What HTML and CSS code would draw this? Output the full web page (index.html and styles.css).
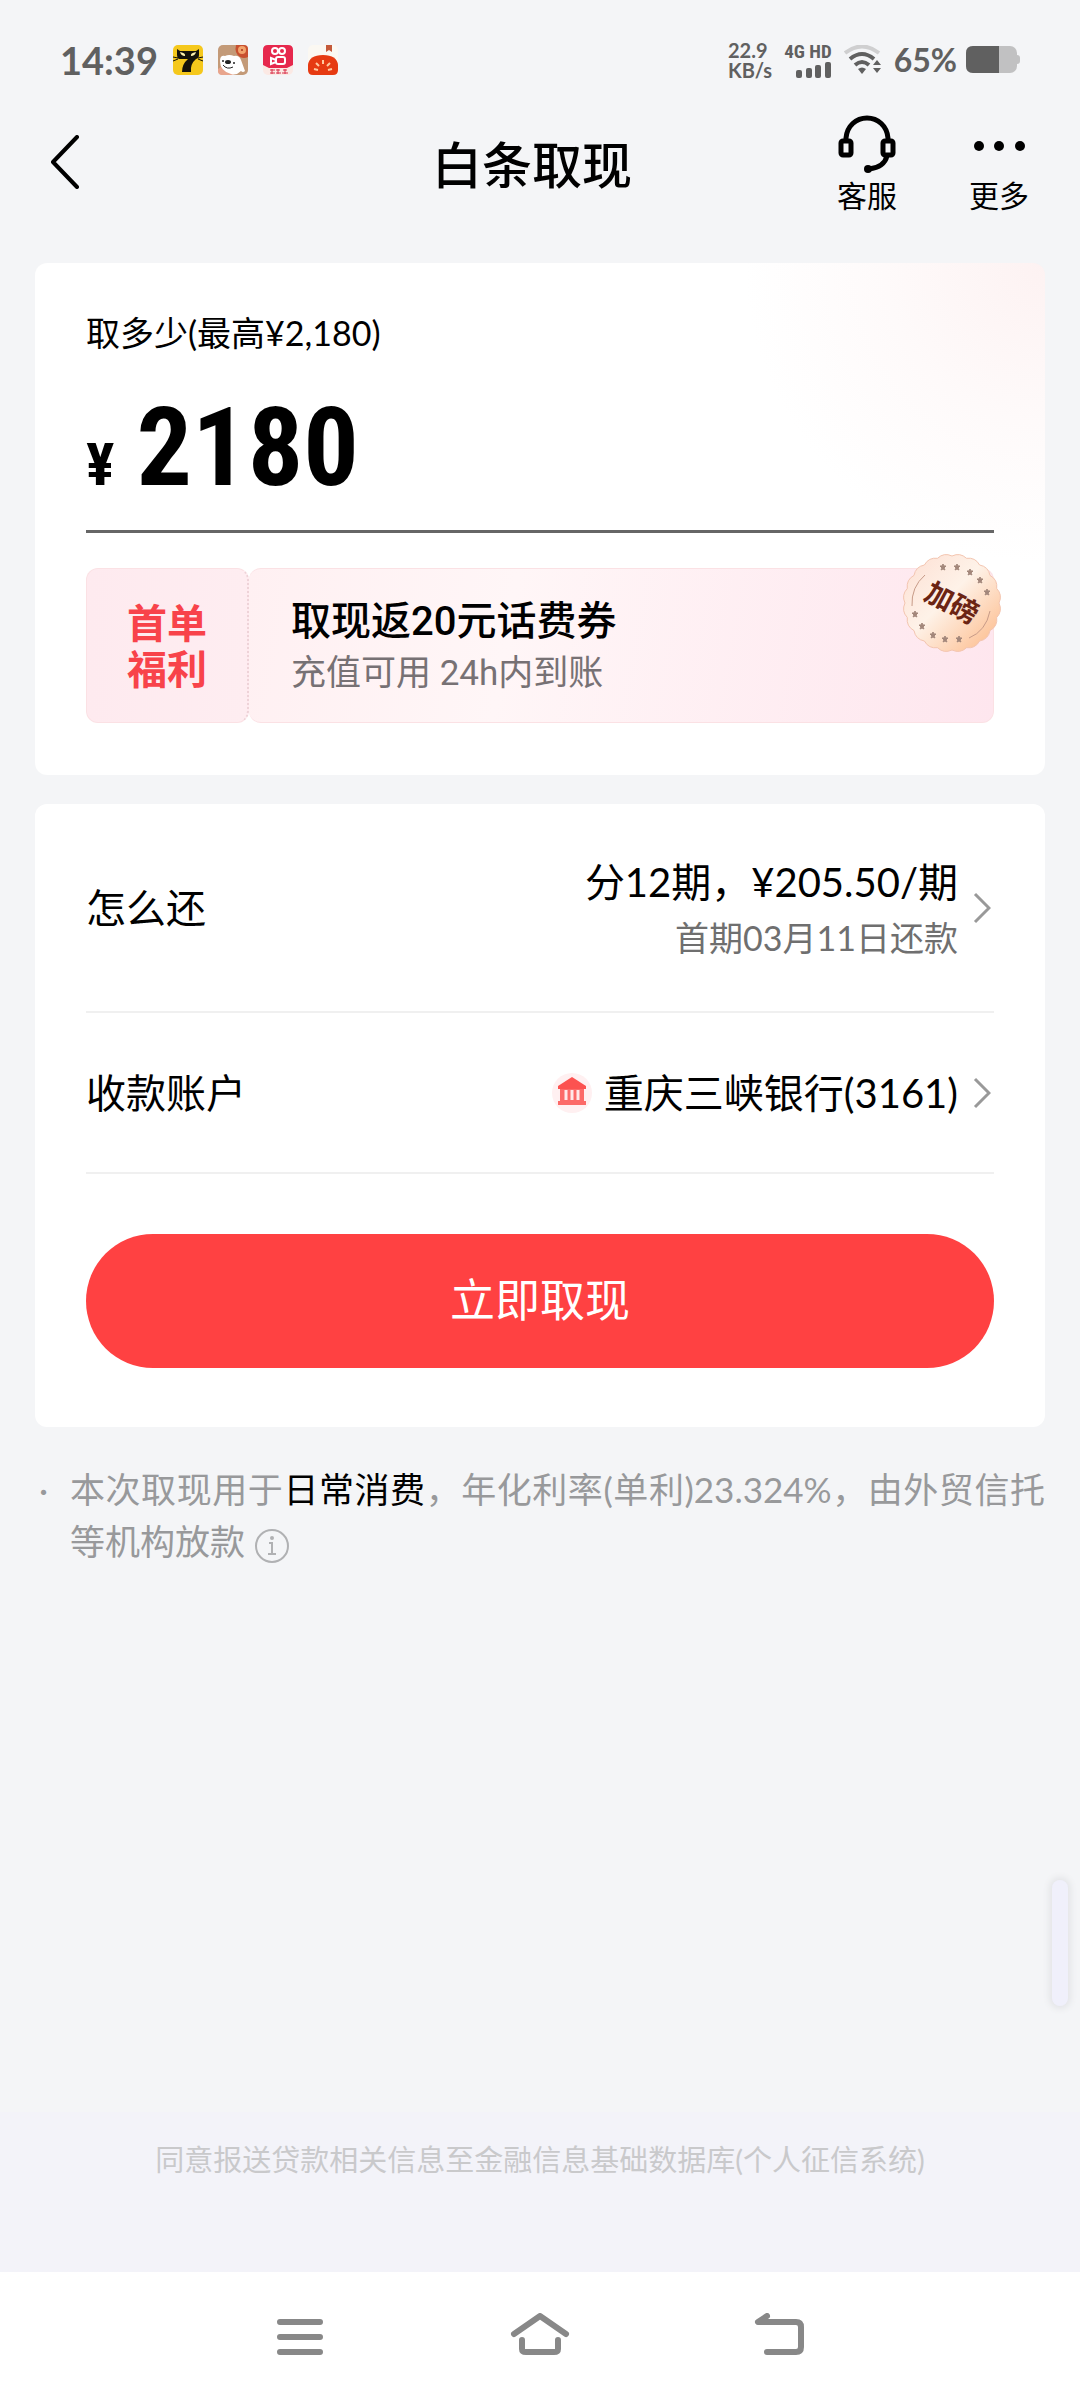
FILE: index.html
```html
<!DOCTYPE html>
<html lang="zh-CN">
<head>
    <meta charset="utf-8">
    <meta name="viewport" content="width=device-width, initial-scale=1.0" />
    <title>白条取现</title>
    <link rel="stylesheet" href="styles.css">
</head>

<body>
    <!-- Status bar -->
    <div class="status-bar">
        <span class="status-time">14:39</span>
        <div class="status-apps">
            <svg width="30" height="30" viewBox="0 0 30 30">
                <rect width="30" height="30" rx="5" fill="#f5c81c"/>
                <path d="M4 4l3 2h16l3-2v6q0 3-3 4-6 5-5 13H9q0-8 6-13H6q-2-1-2-4z" fill="#15130b"/>
                <path d="M0 12l5 1M0 16l5-2M30 12l-5 1M30 16l-5-2" stroke="#15130b" stroke-width="1"/>
                <path d="M7 7q1 4 5 4 1-3-5-4zM23 7q-1 4-5 4-1-3 5-4z" fill="#fff3b0"/>
            </svg>
            <svg width="30" height="30" viewBox="0 0 30 30">
                <rect width="30" height="30" rx="5" fill="#c39a78"/>
                <path d="M18 0h8q4 0 4 4v8q-4 2-8 0-6-4-4-12z" fill="#c8502f"/>
                <circle cx="24" cy="5" r="4" fill="#f2a36b"/>
                <circle cx="24" cy="5" r="1" fill="#a8341b"/>
                <path d="M0 24q5-5 12-1l4 7H4q-4 0-4-4z" fill="#e8a58d"/>
                <path d="M2 16q0-6 5-5 4-2 9 0 5-1 7 4l4 11q-2 2-4 0-5 5-10 3Q2 26 2 16z" fill="#fff"/>
                <ellipse cx="10" cy="17" rx="3" ry="2" fill="#222"/>
                <circle cx="5" cy="16" r="1" fill="#222"/>
                <circle cx="16" cy="18" r="1" fill="#222"/>
                <path d="M5 20q4 5 10 2" fill="none" stroke="#222" stroke-width="1"/>
            </svg>
            <svg width="30" height="30" viewBox="0 0 30 30">
                <rect width="30" height="30" rx="5" fill="#fbe9e4"/>
                <path d="M5 0h20q5 0 5 5v15l-6 3H6l-6-3V5q0-5 5-5z" fill="#e6284d"/>
                <g fill="none" stroke="#fff" stroke-width="2">
                    <circle cx="12" cy="6" r="3"/>
                    <circle cx="19" cy="6" r="3"/>
                    <rect x="13" y="12" width="9" height="7" rx="2"/>
                    <path d="M13 15l-5-2v6l5-2z"/>
                </g>
                <path d="M7 25h5M7 28h5M9 24v5M13 25h4M13 28h5M15 24v5M20 25h4M19 28h6M22 24v5" stroke="#d8304a" stroke-width="1"/>
            </svg>
            <svg width="30" height="30" viewBox="0 0 30 30">
                <rect width="30" height="30" rx="5" fill="#fbf8f2"/>
                <path d="M18 0h6v7l-3-2-3 2z" fill="#c4593a"/>
                <path d="M0 20q1-10 15-10t15 10v5q0 5-5 5H5q-5 0-5-5z" fill="#e63a12"/>
                <path d="M6 24l4 1M8 18l3 3M15 15v4M22 18l-3 3M24 24l-4 1" stroke="#ffc9a0" stroke-width="2"/>
            </svg>
        </div>
        <div class="status-right">
            <span class="net-speed">22.9<br>KB/s</span>
            <div class="signal">
                <span>4G HD</span>
                <svg width="36" height="17" viewBox="0 0 36 17" fill="#606060">
                    <rect x="0" y="8" width="6" height="8" rx="2"/>
                    <rect x="10" y="6" width="6" height="10" rx="2"/>
                    <rect x="19" y="3" width="6" height="13" rx="2"/>
                    <rect x="29" y="0" width="6" height="16" rx="2"/>
                </svg>
            </div>
            <svg class="wifi" width="38" height="30" viewBox="0 0 38 30" fill="none" stroke-width="4">
                <path d="M1 8q17-13 34 0" stroke="#cfcfd0"/>
                <path d="M6 14q12-10 24 0" stroke="#606060"/>
                <path d="M11 20q7-6 14 0" stroke="#606060"/>
                <path d="M14 24q4-3 8 0l-4 5z" fill="#606060"/>
                <path d="M29 20l4-5 4 5zM29 23h8l-4 5z" fill="#606060"/>
            </svg>
            <span class="battery-text">65%</span>
            <svg width="54" height="28" viewBox="0 0 54 28">
                <rect width="51" height="27" rx="7" fill="#c1c1c2"/>
                <path d="M51 9q3 0 3 3v3q0 3-3 3z" fill="#c1c1c2"/>
                <path d="M7 0h26v27H7q-7 0-7-7V7q0-7 7-7z" fill="#606060"/>
            </svg>
        </div>
    </div>

    <!-- Page header -->
    <header class="page-header">
        <button class="back-button" type="button" aria-label="返回">
            <svg width="30" height="54" viewBox="0 0 30 54" fill="none" stroke="#000" stroke-width="4" stroke-linecap="round" stroke-linejoin="round">
                <path d="M27 2L3 27l24 25"/>
            </svg>
        </button>
        <h1 class="page-title">白条取现</h1>
        <div class="header-actions">
            <button class="header-action" type="button">
                <svg width="60" height="60" viewBox="0 -2 60 60" fill="none" stroke="#000" stroke-width="5">
                    <path d="M9 24v-1C10 11 19 3 30 3s20 8 21 20v1"/>
                    <rect x="4" y="26" width="10" height="14" rx="2"/>
                    <rect x="46" y="26" width="10" height="14" rx="2"/>
                    <path d="M50 41c-2 8-9 12-18 13" stroke-linecap="round"/>
                    <circle cx="31" cy="54" r="4" fill="#000" stroke="none"/>
                </svg>
                <span>客服</span>
            </button>
            <button class="header-action" type="button">
                <svg width="60" height="60" viewBox="0 -2 60 60">
                    <circle cx="10" cy="31" r="5"/>
                    <circle cx="30" cy="31" r="5"/>
                    <circle cx="51" cy="31" r="5"/>
                </svg>
                <span>更多</span>
            </button>
        </div>
    </header>

    <main class="content">
        <!-- Amount -->
        <section class="card amount-card">
            <label class="amount-label" for="amount">取多少(最高¥2,180)</label>
            <div class="amount-row">
                <span class="currency">¥</span>
                <input class="amount-input" id="amount" type="text" inputmode="numeric" value="2180" />
            </div>
            <div class="coupon">
                <div class="coupon-tag">首单<br>福利</div>
                <div class="coupon-body">
                    <div class="coupon-title">取现返20元话费券</div>
                    <div class="coupon-desc">充值可用 24h内到账</div>
                </div>
                <svg class="coupon-badge" width="98" height="98" viewBox="-49 -49 98 98">
                    <defs>
                        <linearGradient id="badgeFill" x1="0" y1="0" x2="1" y2="1">
                            <stop offset="0" stop-color="#fddfd3"/>
                            <stop offset="0.45" stop-color="#fef2e8"/>
                            <stop offset="0.85" stop-color="#fdc79f"/>
                            <stop offset="1" stop-color="#fdd3b2"/>
                        </linearGradient>
                        <path id="star" d="M0-3L1-1 3-1 1 1 2 3 0 2-2 3-1 1-3-1-1-1z" fill="#a3877b" stroke="#a3877b" stroke-width="1"/>
                    </defs>
                    <path d="M47 0A13 13 0 0 1 44.7 14.5A13 13 0 0 1 38 27.6A13 13 0 0 1 27.6 38A13 13 0 0 1 14.5 44.7A13 13 0 0 1 0 47A13 13 0 0 1-14.5 44.7A13 13 0 0 1-27.6 38A13 13 0 0 1-38 27.6A13 13 0 0 1-44.7 14.5A13 13 0 0 1-47 0A13 13 0 0 1-44.7-14.5A13 13 0 0 1-38-27.6A13 13 0 0 1-27.6-38A13 13 0 0 1-14.5-44.7A13 13 0 0 1 0-47A13 13 0 0 1 14.5-44.7A13 13 0 0 1 27.6-38A13 13 0 0 1 38-27.6A13 13 0 0 1 44.7-14.5A13 13 0 0 1 47 0z" fill="url(#badgeFill)" stroke="#f3c5b0" stroke-width="1"/>
                    <path d="M-27-28Q-41-16-40 3M38 8Q34 28 17 35" fill="none" stroke="#c79b88" stroke-width="1"/>
                    <use href="#star" x="-9" y="-36"/>
                    <use href="#star" x="5" y="-36"/>
                    <use href="#star" x="18" y="-31"/>
                    <use href="#star" x="28" y="-23"/>
                    <use href="#star" x="35" y="-11"/>
                    <use href="#star" x="-37" y="11"/>
                    <use href="#star" x="-30" y="23"/>
                    <use href="#star" x="-19" y="32"/>
                    <use href="#star" x="-7" y="36"/>
                    <use href="#star" x="7" y="36"/>
                    <text class="badge-text" x="0" y="10" text-anchor="middle" transform="rotate(28)">加磅</text>
                </svg>
            </div>
        </section>

        <!-- Repayment and account -->
        <section class="card detail-card">
            <a class="detail-row repay-row" href="#">
                <span class="detail-name">怎么还</span>
                <span class="detail-value">
                    <span>分12期，¥205.50/期</span>
                    <span class="detail-sub">首期03月11日还款</span>
                </span>
                <svg class="chevron" width="18" height="32" viewBox="0 0 18 32"><path d="M2 2l14 14L2 30"/></svg>
            </a>
            <a class="detail-row" href="#">
                <span class="detail-name">收款账户</span>
                <svg class="bank-icon" width="40" height="40" viewBox="0 0 40 40">
                    <circle cx="20" cy="20" r="20" fill="#fff0f1"/>
                    <path d="M20 4L34 13v3H6v-3z" fill="#fc5250"/>
                    <path d="M8 16h24v12h2v4H6v-4h2z" fill="#fc6a68"/>
                    <path d="M14 17v10M20 17v10M26 17v10" stroke="#ffe8e9" stroke-width="3"/>
                </svg>
                <span class="detail-value">重庆三峡银行(3161)</span>
                <svg class="chevron" width="18" height="32" viewBox="0 0 18 32"><path d="M2 2l14 14L2 30"/></svg>
            </a>
            <button class="submit-button" type="button">立即取现</button>
        </section>

        <!-- Loan note -->
        <div class="note">
            <span class="note-dot">·</span>
            <p class="note-text">本次取现用于<b>日常消费</b>，年化利率(单利)23.324%，由外贸信托等机构放款
                <svg class="info-icon" width="36" height="36" viewBox="0 0 36 36" fill="none" stroke="#b0b1b3" stroke-width="2">
                    <circle cx="18" cy="18" r="16"/>
                    <path d="M15 15h3v11M14 26h8"/>
                    <circle cx="18" cy="10" r="1"/>
                </svg>
            </p>
        </div>
    </main>

    <footer class="agreement">同意报送贷款相关信息至金融信息基础数据库(个人征信系统)</footer>

    <!-- System navigation -->
    <nav class="system-nav">
        <button type="button" aria-label="菜单">
            <svg width="60" height="48" viewBox="0 0 60 48">
                <path d="M10 9h40M10 24h40M10 39h40"/>
            </svg>
        </button>
        <button type="button" aria-label="主页">
            <svg width="60" height="48" viewBox="0 0 60 48">
                <path d="M4 21L30 3l26 18M12 27v9q0 3 4 3h28q4 0 4-3v-9"/>
            </svg>
        </button>
        <button type="button" aria-label="返回上一级">
            <svg width="60" height="48" viewBox="0 0 60 48">
                <path d="M17 3L8 9h38q5 0 5 5v20q0 5-5 5H17"/>
            </svg>
        </button>
    </nav>

    <div class="edge-handle"></div>
</body>
</html>
```

FILE: styles.css
```css
* {
    box-sizing: border-box;
}

body {
    --bg-color: #f4f5f7;
    --status-color: #606060;
    --accent-color: #ff4142;

    font-family: Lato, "Noto Sans CJK SC", sans-serif;
    background-color: var(--bg-color);
    color: #000000;
    margin: 0;
    min-height: 100vh;
    display: flex;
    flex-direction: column;
}

button {
    font-family: inherit;
    color: inherit;
    background: none;
    border: none;
    padding: 0;
    cursor: pointer;
}

svg {
    flex-shrink: 0;
}

/* Status bar */
.status-bar {
    height: 108px;
    padding: 12px 60px 0;
    display: flex;
    align-items: center;
    color: var(--status-color);
    font-weight: 700;
}

.status-time {
    font-size: 38px;
    line-height: 48px;
}

.status-apps {
    display: flex;
    gap: 15px;
    margin-left: 15px;
}

.status-right {
    display: flex;
    align-items: center;
    margin-left: auto;
}

.net-speed {
    font-size: 20px;
    line-height: 20px;
}

.signal {
    display: flex;
    flex-direction: column;
    align-items: flex-end;
    margin-left: 12px;
    font-family: "Roboto Condensed", Roboto, sans-serif;
    font-size: 19px;
    line-height: 20px;
}

.wifi {
    margin-left: 12px;
}

.battery-text {
    margin: 0 9px 0 12px;
    font-size: 32px;
    line-height: 40px;
}

/* Page header */
.page-header {
    height: 155px;
    padding: 5px 51px 0 35px;
    display: grid;
    grid-template-columns: 1fr auto 1fr;
    align-items: start;
}

.back-button {
    justify-self: start;
    padding: 22px 15px;
}

.back-button svg {
    display: block;
}

.page-title {
    margin: 16px 0;
    font-size: 50px;
    line-height: 72px;
    font-weight: 500;
}

.header-actions {
    display: flex;
    justify-content: flex-end;
    gap: 72px;
}

.header-action {
    display: flex;
    flex-direction: column;
    align-items: center;
    font-size: 30px;
    line-height: 44px;
}

/* Cards */
.content {
    flex-grow: 1;
    padding: 0 35px;
}

.card {
    background-color: #ffffff;
    border-radius: 12px;
    padding: 0 51px;
}

.amount-card {
    padding-top: 46px;
    padding-bottom: 52px;
    background-image: radial-gradient(circle at 100% 0, #fdf2f2, #fefafa 160px, #ffffff 300px);
}

.amount-label {
    display: block;
    font-size: 34px;
    line-height: 48px;
}

.amount-row {
    display: flex;
    align-items: baseline;
    gap: 22px;
    margin-top: 30px;
    padding-bottom: 23px;
    border-bottom: 3px solid #666666;
    font-family: "Roboto Condensed", Roboto, sans-serif;
    font-weight: 700;
}

.currency {
    font-size: 60px;
}

.amount-input {
    flex-grow: 1;
    min-width: 0;
    height: 120px;
    padding: 0;
    border: none;
    outline: none;
    background: transparent;
    color: inherit;
    font-family: inherit;
    font-size: 110px;
    font-weight: inherit;
}

/* Coupon */
.coupon {
    position: relative;
    display: flex;
    height: 155px;
    margin-top: 35px;
}

.coupon-tag,
.coupon-body {
    border-radius: 12px;
    border: 1px solid #fbe1e4;
    display: flex;
    flex-direction: column;
    justify-content: center;
}

.coupon-tag {
    width: 163px;
    align-items: center;
    border-right: 2px dotted #eed3d8;
    background: linear-gradient(to right, #feeaef, #feedf1);
    color: #f8434a;
    font-size: 40px;
    line-height: 46px;
    font-weight: 700;
}

.coupon-body {
    flex-grow: 1;
    padding: 4px 0 0 42px;
    border-left: none;
    background: linear-gradient(100deg, #fff0f2, #fff6f7 35%, #fee6ee);
    font-family: Roboto, "Noto Sans CJK SC", sans-serif;
}

.coupon-title {
    font-size: 40px;
    line-height: 52px;
    font-weight: 500;
}

.coupon-desc {
    color: #777174;
    font-size: 35px;
    line-height: 52px;
}

.coupon-badge {
    position: absolute;
    top: -14px;
    right: -7px;
}

.badge-text {
    fill: #6b2413;
    font-size: 28px;
    font-weight: 700;
}

/* Detail rows */
.detail-card {
    margin-top: 29px;
    padding-bottom: 59px;
}

.detail-row {
    display: flex;
    align-items: center;
    height: 161px;
    border-bottom: 2px solid #f0f0f0;
    color: inherit;
    font-size: 40px;
    line-height: 60px;
    text-decoration: none;
}

.repay-row {
    height: 209px;
}

.detail-name {
    margin-right: auto;
}

.detail-value {
    display: flex;
    flex-direction: column;
    align-items: flex-end;
}

.detail-sub {
    color: #6f6f6f;
    font-size: 34px;
    line-height: 52px;
}

.bank-icon {
    margin-right: 12px;
}

.chevron {
    margin: 0 3px 0 15px;
    fill: none;
    stroke: #999999;
    stroke-width: 3;
}

.submit-button {
    display: block;
    width: 100%;
    height: 134px;
    margin-top: 60px;
    padding-bottom: 8px;
    border-radius: 67px;
    background-color: var(--accent-color);
    color: #ffffff;
    font-size: 45px;
}

/* Loan note */
.note {
    display: flex;
    margin-top: 36px;
    color: #98999b;
    font-size: 35px;
    line-height: 52px;
}

.note-dot {
    width: 35px;
    flex-shrink: 0;
    padding-left: 4px;
}

.note-text {
    margin: 0;
    flex-grow: 1;
    text-align: justify;
}

.note-text b {
    color: #000000;
    font-weight: 400;
}

.info-icon {
    vertical-align: middle;
}

/* Bottom */
.agreement {
    height: 160px;
    padding: 26px 20px;
    background-color: #f3f3f9;
    color: #c9c9cb;
    font-size: 29px;
    line-height: 44px;
    text-align: center;
}

.system-nav {
    height: 128px;
    padding: 4px 180px 0;
    background-color: #ffffff;
    display: grid;
    grid-template-columns: repeat(3, 1fr);
}

.system-nav svg {
    fill: none;
    stroke: #888888;
    stroke-width: 6;
    stroke-linecap: round;
    stroke-linejoin: round;
}

/* Side handle over the page edge */
.edge-handle {
    position: fixed;
    right: 12px;
    bottom: 394px;
    width: 16px;
    height: 126px;
    border-radius: 8px;
    background-color: #f0f0fb;
    box-shadow: 0 0 6px 3px #e4e5e8;
}
```
